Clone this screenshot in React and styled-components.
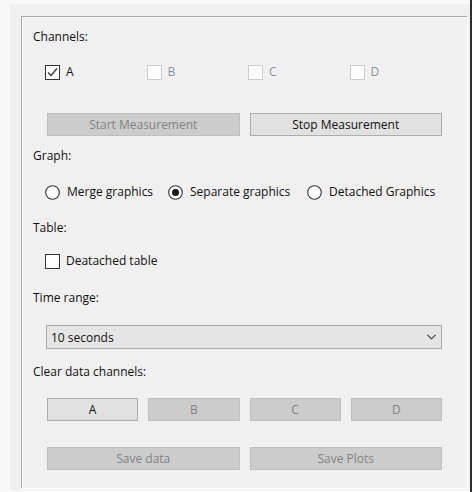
import React from "react";
import styled, { createGlobalStyle } from "styled-components";

const Global = createGlobalStyle`
  html, body { margin: 0; padding: 0; background: #f9f9f9; }
  body { font-family: "Open Sans", "Noto Sans", sans-serif; font-size: 12px; color: #111; }
`;

const Page = styled.div`
  width: 472px;
  height: 492px;
  box-sizing: border-box;
  padding: 4px 0 2px 10px;
  display: flex;
  background: #f9f9f9;
`;

const Panel = styled.div`
  flex: 1;
  background: #f0f0f0;
  padding: 12px 3px 2px 11px;
  display: flex;
`;

const DarkEdge = styled.div`
  width: 2px;
  margin-top: -4px;
  margin-bottom: -2px;
  background: #2e2e2e;
`;

const GroupBox = styled.div`
  flex: 1;
  border-top: 1px solid #a8a8a8;
  border-left: 1px solid #a8a8a8;
  box-shadow: inset 1px 1px 0 #ffffff, 1px 1px 0 #ffffff;
  display: flex;
  flex-direction: column;
  padding: 0 0 0 11px;
`;

const Label = styled.div`
  height: 16px;
  line-height: 16px;
  margin-top: ${(p) => p.$mt}px;
  color: #111;
  white-space: nowrap;
`;

const Indented = styled.div`
  margin-left: 12px;
  margin-top: ${(p) => p.$mt}px;
`;

const CheckGrid = styled.div`
  display: grid;
  grid-template-columns: repeat(4, 101.5px);
`;

const CheckItem = styled.label`
  display: flex;
  align-items: center;
  gap: 6px;
  height: 16px;
  line-height: 16px;
  color: ${(p) => (p.$disabled ? "#8b93a0" : "#111")};
  white-space: nowrap;
`;

const Box = styled.span`
  width: 13px;
  height: 13px;
  border: 1px solid ${(p) => (p.$disabled ? "#cccccc" : "#333333")};
  background: #ffffff;
  display: inline-flex;
  align-items: center;
  justify-content: center;
  flex: none;
`;

const ButtonGrid = styled.div`
  display: grid;
  grid-template-columns: repeat(${(p) => p.$cols}, 1fr);
  column-gap: 10px;
  width: 395px;
  margin-left: 14px;
  margin-top: ${(p) => p.$mt}px;
`;

const Button = styled.div`
  height: 23px;
  box-sizing: border-box;
  border: 1px solid ${(p) => (p.$disabled ? "#bfbfbf" : "#adadad")};
  background: ${(p) => (p.$disabled ? "#cccccc" : "#e1e1e1")};
  color: ${(p) => (p.$disabled ? "#838383" : "#111")};
  display: flex;
  align-items: center;
  justify-content: center;
  white-space: nowrap;
`;

const RadioGrid = styled.div`
  display: grid;
  grid-template-columns: 123px 139px auto;
`;

const RadioItem = styled.label`
  display: flex;
  align-items: center;
  gap: 7px;
  height: 16px;
  line-height: 16px;
  white-space: nowrap;
`;

const Combo = styled.div`
  height: 24px;
  box-sizing: border-box;
  width: 396px;
  margin-left: 13px;
  margin-top: ${(p) => p.$mt}px;
  border: 1px solid #acacac;
  background: #e5e5e5;
  display: flex;
  align-items: center;
  justify-content: space-between;
  padding: 0 5px 0 4px;
`;

const Check = () => (
  <svg width="11" height="11" viewBox="0 0 11 11">
    <path d="M1 5.5 L4 8.5 L10 1.5" fill="none" stroke="#333" strokeWidth="1.3" />
  </svg>
);

const Radio = ({ on }) => (
  <svg width="15" height="15" viewBox="0 0 15 15" style={{ flex: "none" }}>
    <circle cx="7.5" cy="7.5" r="6.8" fill="#fff" stroke="#333" strokeWidth="1.1" />
    {on && <circle cx="7.5" cy="7.5" r="3.5" fill="#1a1a1a" />}
  </svg>
);

const Chevron = () => (
  <svg width="9" height="6" viewBox="0 0 9 6">
    <path d="M0.5 0.8 L4.5 4.8 L8.5 0.8" fill="none" stroke="#333" strokeWidth="1.1" />
  </svg>
);

export default function App() {
  return (
    <>
      <Global />
      <Page>
        <Panel>
          <GroupBox>
            <Label $mt={12}>Channels:</Label>
            <Indented $mt={19}>
              <CheckGrid>
                <CheckItem>
                  <Box><Check /></Box>A
                </CheckItem>
                <CheckItem $disabled>
                  <Box $disabled />B
                </CheckItem>
                <CheckItem $disabled>
                  <Box $disabled />C
                </CheckItem>
                <CheckItem $disabled>
                  <Box $disabled />D
                </CheckItem>
              </CheckGrid>
            </Indented>
            <ButtonGrid $cols={2} $mt={33}>
              <Button $disabled>Start Measurement</Button>
              <Button>Stop Measurement</Button>
            </ButtonGrid>
            <Label $mt={12}>Graph:</Label>
            <Indented $mt={20}>
              <RadioGrid>
                <RadioItem><Radio />Merge graphics</RadioItem>
                <RadioItem><Radio on />Separate graphics</RadioItem>
                <RadioItem><Radio />Detached Graphics</RadioItem>
              </RadioGrid>
            </Indented>
            <Label $mt={20}>Table:</Label>
            <Indented $mt={17}>
              <CheckItem>
                <Box />Deatached table
              </CheckItem>
            </Indented>
            <Label $mt={21}>Time range:</Label>
            <Combo $mt={19}>
              <span>10 seconds</span>
              <Chevron />
            </Combo>
            <Label $mt={15}>Clear data channels:</Label>
            <ButtonGrid $cols={4} $mt={18}>
              <Button>A</Button>
              <Button $disabled>B</Button>
              <Button $disabled>C</Button>
              <Button $disabled>D</Button>
            </ButtonGrid>
            <ButtonGrid $cols={2} $mt={26}>
              <Button $disabled>Save data</Button>
              <Button $disabled>Save Plots</Button>
            </ButtonGrid>
          </GroupBox>
        </Panel>
        <DarkEdge />
      </Page>
    </>
  );
}
